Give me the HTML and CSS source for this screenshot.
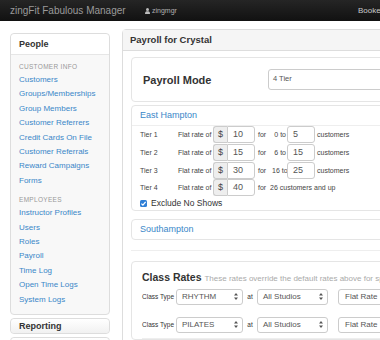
FILE: index.html
```html
<!DOCTYPE html>
<html lang="en">
<head>
    <meta charset="UTF-8">
    <meta name="viewport" content="width=device-width, initial-scale=1.0">
    <title>zingFit Fabulous Manager</title>
    <link rel="stylesheet" href="styles.css">
</head>
<body>
    <div class="navbar">
        <span class="brand">zingFit Fabulous Manager</span>
        <span class="user">
            <svg width="5" height="6" viewBox="0 0 10 12"><circle cx="5" cy="3" r="3" fill="#bbb"/><path d="M0 12 C0 7 2 6.5 5 6.5 C8 6.5 10 7 10 12 Z" fill="#bbb"/></svg>
            zingmgr
        </span>
        <span class="nav-link">Booked</span>
    </div>

    <div class="page">
        <div class="sidebar">
            <div class="side-card">
                <div class="side-head">People</div>
                <div class="side-body">
                    <div class="side-label">Customer Info</div>
                    <a class="side-link" href="#">Customers</a>
                    <a class="side-link" href="#">Groups/Memberships</a>
                    <a class="side-link" href="#">Group Members</a>
                    <a class="side-link" href="#">Customer Referrers</a>
                    <a class="side-link" href="#">Credit Cards On File</a>
                    <a class="side-link" href="#">Customer Referrals</a>
                    <a class="side-link" href="#">Reward Campaigns</a>
                    <a class="side-link" href="#">Forms</a>
                    <div class="side-label gap">Employees</div>
                    <a class="side-link" href="#">Instructor Profiles</a>
                    <a class="side-link" href="#">Users</a>
                    <a class="side-link" href="#">Roles</a>
                    <a class="side-link" href="#">Payroll</a>
                    <a class="side-link" href="#">Time Log</a>
                    <a class="side-link" href="#">Open Time Logs</a>
                    <a class="side-link" href="#">System Logs</a>
                </div>
            </div>
            <div class="side-card closed">
                <div class="side-head">Reporting</div>
            </div>
            <div class="side-card closed">
                <div class="side-head">Settings</div>
            </div>
        </div>

        <div class="main">
            <div class="panel">
                <div class="panel-head">Payroll for Crystal</div>
                <div class="panel-body">
                    <div class="mode-box">
                        <span class="mode-label">Payroll Mode</span>
                        <div class="select wide">4 Tier</div>
                    </div>

                    <div class="loc-panel">
                        <div class="loc-head">East Hampton</div>
                        <div class="loc-body">
                            <div class="tier-row">
                                <span class="tier-label">Tier 1</span>
                                <span class="flat">Flat rate of</span>
                                <span class="addon">$</span><span class="field">10</span>
                                <span class="for">for</span><span class="from">0 to</span>
                                <span class="field">5</span>
                                <span class="unit">customers</span>
                            </div>
                            <div class="tier-row">
                                <span class="tier-label">Tier 2</span>
                                <span class="flat">Flat rate of</span>
                                <span class="addon">$</span><span class="field">15</span>
                                <span class="for">for</span><span class="from">6 to</span>
                                <span class="field">15</span>
                                <span class="unit">customers</span>
                            </div>
                            <div class="tier-row">
                                <span class="tier-label">Tier 3</span>
                                <span class="flat">Flat rate of</span>
                                <span class="addon">$</span><span class="field">30</span>
                                <span class="for">for</span><span class="from">16 to</span>
                                <span class="field">25</span>
                                <span class="unit">customers</span>
                            </div>
                            <div class="tier-row">
                                <span class="tier-label">Tier 4</span>
                                <span class="flat">Flat rate of</span>
                                <span class="addon">$</span><span class="field">40</span>
                                <span class="for">for&nbsp; 26 customers and up</span>
                            </div>
                            <div class="check-row">
                                <span class="checkbox">
                                    <svg width="7" height="7" viewBox="0 0 10 10"><path d="M2 5.2 L4.2 7.3 L8 2.8" fill="none" stroke="#fff" stroke-width="1.8"/></svg>
                                </span>
                                Exclude No Shows
                            </div>
                        </div>
                    </div>

                    <div class="loc-panel">
                        <div class="loc-head plain">Southampton</div>
                    </div>

                    <div class="divider"></div>

                    <div class="rates-panel">
                        <div class="rates-title">Class Rates <span class="rates-note">These rates override the default rates above for specific classes</span></div>
                        <div class="rate-row">
                            <span class="rate-label">Class Type</span>
                            <div class="select type">RHYTHM <svg class="arrows" width="4" height="7" viewBox="0 0 4 7"><path d="M2 0 L4 2.6 L0 2.6 Z M2 7 L4 4.4 L0 4.4 Z" fill="#555"/></svg></div>
                            <span class="at">at</span>
                            <div class="select studio">All Studios <svg class="arrows" width="4" height="7" viewBox="0 0 4 7"><path d="M2 0 L4 2.6 L0 2.6 Z M2 7 L4 4.4 L0 4.4 Z" fill="#555"/></svg></div>
                            <div class="select rate">Flat Rate</div>
                        </div>
                        <div class="rate-row">
                            <span class="rate-label">Class Type</span>
                            <div class="select type">PILATES <svg class="arrows" width="4" height="7" viewBox="0 0 4 7"><path d="M2 0 L4 2.6 L0 2.6 Z M2 7 L4 4.4 L0 4.4 Z" fill="#555"/></svg></div>
                            <span class="at">at</span>
                            <div class="select studio">All Studios <svg class="arrows" width="4" height="7" viewBox="0 0 4 7"><path d="M2 0 L4 2.6 L0 2.6 Z M2 7 L4 4.4 L0 4.4 Z" fill="#555"/></svg></div>
                            <div class="select rate">Flat Rate</div>
                        </div>
                        <div class="rates-end"></div>
                    </div>
                </div>
            </div>
        </div>
    </div>
</body>
</html>
```

FILE: styles.css
```css
body {
    margin: 0;
    font-family: "Liberation Sans", Arial, sans-serif;
    color: #333;
    background-color: #fff;
    overflow: hidden;
}
.navbar {
    width: 460px;
    height: 21px;
    background: linear-gradient(#252525, #111);
    display: flex;
    align-items: center;
    padding-left: 10px;
    white-space: nowrap;
}
.brand {
    flex: 0 0 135px;
    color: #9a9a9a;
    font-size: 10px;
}
.user {
    flex: 0 0 213px;
    display: flex;
    align-items: center;
    gap: 2px;
    color: #b0b0b0;
    font-size: 7px;
}
.nav-link {
    color: #c8c8c8;
    font-size: 8px;
}
.page {
    display: flex;
    align-items: flex-start;
    gap: 12px;
    padding: 8px 0 0 10px;
    width: 470px;
}
.sidebar {
    flex: 0 0 100px;
    margin-top: 4px;
}
.side-card {
    border: 1px solid #ddd;
    border-radius: 4px;
    background-color: #f8f8f8;
    margin-bottom: 3px;
}
.side-head {
    background-color: #fff;
    border-bottom: 1px solid #e6e6e6;
    border-radius: 4px 4px 0 0;
    height: 20px;
    line-height: 20px;
    padding-left: 8px;
    font-size: 9px;
    font-weight: bold;
}
.side-card.closed .side-head {
    height: 14px;
    line-height: 14px;
    border-bottom: none;
    border-radius: 4px;
    background: linear-gradient(#fff, #f1f1f1);
}
.side-body {
    padding: 5px 0 7px 8px;
}
.side-label {
    font-size: 6.5px;
    line-height: 13px;
    color: #999;
    letter-spacing: 0.3px;
    text-transform: uppercase;
}
.side-label.gap {
    margin-top: 5px;
}
.side-link {
    display: block;
    font-size: 8px;
    line-height: 14.4px;
    color: #3a87c8;
    text-decoration: none;
}
.main {
    flex: 0 0 440px;
}
.panel {
    border: 1px solid #ddd;
    border-radius: 4px 4px 0 0;
}
.panel-head {
    background-color: #f5f5f5;
    border-bottom: 1px solid #ddd;
    height: 20px;
    line-height: 20px;
    padding-left: 7px;
    font-size: 9.5px;
    font-weight: bold;
}
.panel-body {
    padding: 6px 8px 0;
}
.mode-box {
    display: flex;
    align-items: center;
    height: 43px;
    padding-left: 11px;
    border: 1px solid #e5e5e5;
    border-radius: 4px;
}
.mode-label {
    flex: 0 0 125px;
    font-size: 11px;
    font-weight: bold;
}
.select {
    display: flex;
    align-items: center;
    box-sizing: border-box;
    border: 1px solid #ccc;
    border-radius: 3px;
    padding-left: 4px;
    background-color: #fff;
    color: #555;
    font-size: 8px;
}
.select.wide {
    flex: 1;
    height: 21px;
    font-size: 7.5px;
    align-items: flex-start;
    padding-top: 4px;
}
.loc-panel {
    margin-top: 3px;
    border: 1px solid #e5e5e5;
    border-radius: 4px;
}
.loc-head {
    height: 19px;
    line-height: 19px;
    padding-left: 8px;
    color: #3a87c8;
    font-size: 9px;
    border-bottom: 1px solid #eee;
}
.loc-head.plain {
    border-bottom: none;
}
.loc-panel + .loc-panel {
    margin-top: 8px;
}
.loc-body {
    padding: 0 8px;
}
.tier-row {
    display: flex;
    align-items: center;
    height: 17.7px;
    font-size: 7px;
    color: #444;
}
.tier-label {
    flex: 0 0 38px;
}
.flat {
    flex: 0 0 35px;
}
.addon {
    box-sizing: border-box;
    width: 14px;
    height: 17px;
    line-height: 15px;
    text-align: center;
    background-color: #eee;
    border: 1px solid #ccc;
    border-right: none;
    border-radius: 3px 0 0 3px;
    font-size: 9px;
}
.field {
    box-sizing: border-box;
    width: 28px;
    height: 17px;
    line-height: 15px;
    padding-left: 5px;
    background-color: #fff;
    border: 1px solid #ccc;
    border-radius: 0 3px 3px 0;
    font-size: 9px;
    color: #555;
}
.from + .field {
    border-radius: 3px;
    margin-left: 1px;
}
.for {
    margin-left: 3px;
    width: 14px;
    white-space: nowrap;
}
.from {
    width: 14px;
    text-align: right;
    white-space: nowrap;
}
.unit {
    margin-left: 2px;
}
.check-row {
    display: flex;
    align-items: center;
    gap: 4px;
    height: 13px;
    font-size: 8.5px;
}
.checkbox {
    display: flex;
    align-items: center;
    justify-content: center;
    width: 7px;
    height: 7px;
    border-radius: 1.5px;
    background-color: #2f7fd6;
}
.divider {
    margin-top: 10px;
    border-top: 1px solid #eee;
}
.rates-panel {
    margin-top: 10px;
    border: 1px solid #e5e5e5;
    border-radius: 4px;
    padding: 8px 10px 0;
}
.rates-title {
    height: 14px;
    line-height: 14px;
    font-size: 10.5px;
    font-weight: bold;
    white-space: nowrap;
}
.rates-note {
    font-size: 8px;
    font-weight: normal;
    color: #aaa;
}
.rate-row {
    display: flex;
    align-items: center;
    height: 16px;
    margin-top: 5px;
    font-size: 6.5px;
}
.rate-row + .rate-row {
    margin-top: 12px;
}
.rate-label {
    flex: 0 0 34px;
}
.select.type {
    width: 67px;
    height: 16px;
    padding-left: 5px;
}
.select.studio {
    width: 71px;
    height: 16px;
    padding-left: 5px;
}
.select.rate {
    width: 70px;
    height: 16px;
    padding-left: 6px;
    margin-left: 10px;
}
.arrows {
    margin-left: auto;
    margin-right: 4px;
}
.at {
    width: 14px;
    text-align: center;
}
.rates-end {
    margin-top: 5px;
    border-top: 1px solid #eee;
}
```
